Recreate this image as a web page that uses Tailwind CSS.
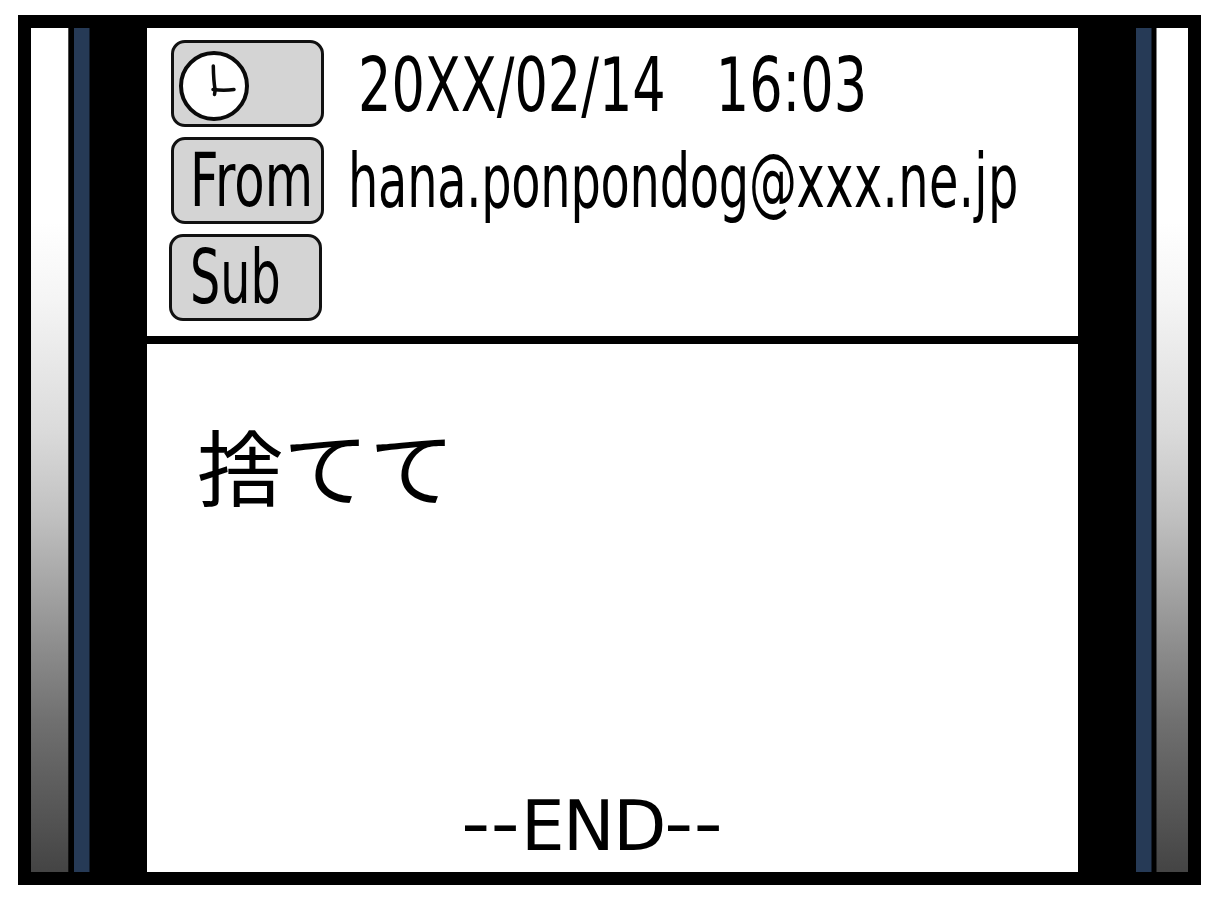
<!DOCTYPE html>
<html lang="ja">
<head>
    <meta charset="UTF-8">
    <meta name="viewport" content="width=device-width, initial-scale=1.0">
    <title>Mail</title>
    <script src="https://cdn.jsdelivr.net/npm/@tailwindcss/browser@4"></script>
</head>
<body class="bg-white w-[1220px] h-[910px] overflow-hidden pl-[18px] pt-[15px] text-black font-['DejaVu_Sans','Noto_Sans_CJK_JP',sans-serif]">
    <div class="w-[1183px] h-[870px] bg-black border-[13px] border-black flex">
        <!-- Left side of the phone -->
        <div class="w-[38px] shrink-0 border-r border-black/70 bg-[linear-gradient(#fff_23%,#f5f5f5_32%,#dadada_48%,#c0c0c0_58%,#a5a5a5_66%,#707070_82%,#444_100%)]"></div>
        <div class="w-[16px] shrink-0 ml-[5px] bg-[#263a56] border-r border-[#121c2b]"></div>

        <!-- Screen -->
        <main class="w-[931px] shrink-0 ml-[57px] bg-white flex flex-col">
            <header class="h-[316px] shrink-0 border-b-8 border-black pt-3 flex flex-col gap-[10px]">
                <div class="flex h-[87px] pl-6">
                    <div class="w-[153px] h-[87px] shrink-0 rounded-[14px] border-3 border-[#111] bg-[#d4d4d4]">
                        <svg class="w-[76px] h-[81px]" viewBox="0 0 76 81" fill="none" stroke="#0a0a0a" stroke-linecap="round" stroke-linejoin="round">
                            <circle cx="40" cy="43" r="33" fill="white" stroke-width="4" />
                            <path d="M39.300 23Q39.500 38 41.200 47L40.500 51.500" stroke-width="3.500" />
                            <path d="M39 46.500Q50 48 60 46.500" stroke-width="3.500" />
                        </svg>
                    </div>
                    <div class="ml-[34px] whitespace-pre text-[75px] leading-[91px] origin-left scale-x-[0.7]">20XX/02/14   16:03</div>
                </div>
                <div class="flex h-[87px] pl-6">
                    <div class="w-[153px] h-[87px] shrink-0 rounded-[14px] border-3 border-[#111] bg-[#d4d4d4] pl-4">
                        <div class="w-max text-[75px] leading-[81px] origin-left scale-x-[0.662]">From</div>
                    </div>
                    <div class="ml-6 flex whitespace-nowrap text-[75px] leading-[88px] origin-left scale-x-[0.638]"><span class="tracking-[-0.4px]">hana.ponpondog@</span><span class="tracking-[0.6px]">xxx.ne.jp</span></div>
                </div>
                <div class="flex h-[87px] pl-[22px]">
                    <div class="w-[153px] h-[87px] shrink-0 rounded-[14px] border-3 border-[#111] bg-[#d4d4d4] pl-[18px]">
                        <div class="w-max text-[75px] leading-[80px] origin-left scale-x-[0.635]">Sub</div>
                    </div>
                </div>
            </header>

            <!-- Mail body -->
            <section class="grow flex flex-col justify-between">
                <p class="mt-[79px] ml-[50px] w-max text-[86px] leading-[86px] origin-top scale-y-[0.96] font-['Noto_Sans_CJK_JP',sans-serif]">捨てて</p>
                <p class="flex ml-[314px] mb-[10px] text-[69px] leading-[72px]">
                    <span class="w-[60px] -mt-[3px] origin-left scale-x-[1.18]">--</span>
                    <span class="w-[143px] tracking-[-1.5px]">END</span>
                    <span class="-mt-[3px] origin-left scale-x-[1.18]">--</span>
                </p>
            </section>
        </main>

        <!-- Right side of the phone -->
        <div class="w-[16px] shrink-0 ml-[58px] bg-[#263a56] border-r border-[#121c2b]"></div>
        <div class="grow ml-[4px] border-l border-black/50 bg-[linear-gradient(#fff_23%,#f5f5f5_32%,#dadada_48%,#c0c0c0_58%,#a5a5a5_66%,#707070_82%,#444_100%)]"></div>
    </div>
</body>
</html>
